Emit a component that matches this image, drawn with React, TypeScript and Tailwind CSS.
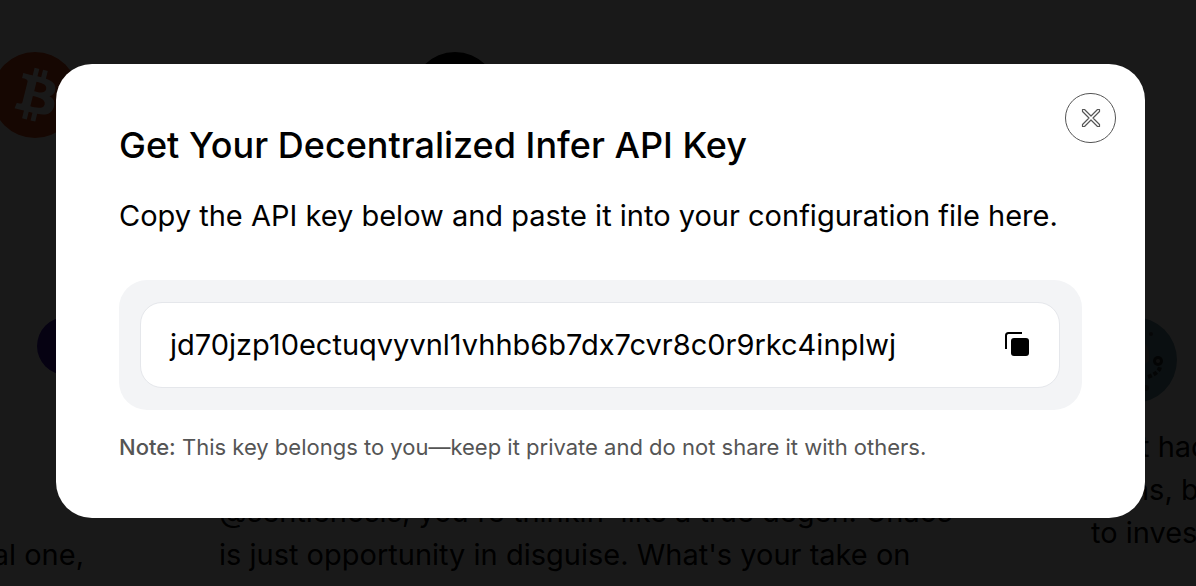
import React from "react";

function BitcoinAvatar() {
  return (
    <svg viewBox="0 0 64 64" className="size-[86px] shrink-0" aria-hidden="true">
      <circle cx="32" cy="32" r="32" fill="#dc4614" />
      <path
        fill="#fff"
        transform="translate(1 0.5)"
        d="M46.1 27.4c.6-4.3-2.6-6.5-7-8l1.400-5.700-3.500-.9-1.400 5.500c-.9-.2-1.900-.4-2.800-.7l1.400-5.500-3.500-.9-1.400 5.700c-.8-.2-1.500-.3-2.200-.5l-4.800-1.200-.9 3.700s2.600.6 2.500.6c1.400.4 1.700 1.300 1.600 2l-1.600 6.500-2.300 9.100c-.2.400-.6 1.100-1.600.8 0 .1-2.500-.6-2.500-.6l-1.700 4 4.500 1.100 2.500.6-1.400 5.800 3.500.9 1.400-5.700c.9.3 1.900.5 2.800.7l-1.400 5.700 3.500.9 1.400-5.800c5.900 1.100 10.400.7 12.300-4.700 1.500-4.300-.1-6.800-3.200-8.400 2.300-.5 4-2 4.400-5zm-7.900 11.100c-1.100 4.300-8.300 2-10.700 1.400l1.900-7.700c2.400.6 9.900 1.800 8.800 6.300zm1.100-11.200c-1 3.900-7 1.900-8.900 1.400l1.700-7c2 .5 8.200 1.400 7.200 5.600z"
      />
    </svg>
  );
}

function DottedAvatar() {
  return (
    <svg viewBox="0 0 86 86" className="size-[86px]" aria-hidden="true">
      <circle cx="43" cy="43" r="43" fill="#6a98a8" />
      <path d="M46 22q14 4 12 22l-8 6z" fill="#a0a4a4" />
      <circle cx="67" cy="44" r="5" fill="#20292e" />
      <circle cx="67" cy="44" r="2" fill="#909090" />
      <circle cx="60" cy="17" r="2" fill="#404b50" />
      <path d="M57 60q11-4 12-10" stroke="#28343a" strokeWidth="4" strokeDasharray="4 2" fill="none" />
      <circle cx="55" cy="71" r="3" fill="#4c5960" />
    </svg>
  );
}

function CloseIcon() {
  return (
    <svg viewBox="0 0 20 20" className="size-5" fill="none" stroke="#555" strokeWidth="1.2" strokeLinejoin="round" aria-hidden="true">
      <path d="M1.500 1.500H3.500L10 8 16.500 1.500H18.500V3.500L12 10 18.500 16.500V18.500H16.500L10 12 3.500 18.500H1.500V16.500L8 10 1.500 3.500Z" />
    </svg>
  );
}

function CopyIcon() {
  return (
    <svg viewBox="0 0 24 24" className="size-6" aria-hidden="true">
      <path d="M1 17V3.500Q1 1 3.500 1H17" fill="none" stroke="#000" strokeWidth="2" />
      <rect x="6" y="6" width="18" height="18" rx="3" />
    </svg>
  );
}

function Backdrop() {
  return (
    <div className="absolute inset-0 overflow-hidden bg-white text-[29px] leading-[43px]" aria-hidden="true">
      <div className="-ml-2 flex gap-[334px] pt-[52px]">
        <BitcoinAvatar />
        <div className="size-[86px] shrink-0 rounded-full bg-black" />
      </div>
      <div className="mt-[135px] flex justify-center gap-[22px] pl-1">
        <section className="w-[850px] shrink-0 px-11 pt-11">
          <div className="mr-[14px] ml-auto size-[58px] rounded-full bg-[#3c14b4]" />
          <p className="mt-[158px] mr-[25px] text-right">You're a real one,</p>
        </section>
        <section className="w-[850px] shrink-0 px-11 pt-11">
          <div className="size-[86px] rounded-full bg-slate-300" />
          <p className="mt-[87px]">
            @sentienosis, you're thinkin' like a true degen. Chaos
            <br />
            is just opportunity in disguise. What's your take on
            <br />
            the market?
          </p>
        </section>
        <section className="w-[850px] shrink-0 px-11 pt-11">
          <DottedAvatar />
          <p className="mt-[22px]">
            Just had some big wins
            <br />
            coins, but I am ready
            <br />
            to invest again
          </p>
        </section>
      </div>
    </div>
  );
}

export default function App() {
  const apiKey = "jd70jzp10ectuqvyvnl1vhhb6b7dx7cvr8c0r9rkc4inplwj";
  return (
    <div className="relative min-h-screen font-['Inter',sans-serif] text-black">
      <Backdrop />
      <div className="relative flex min-h-screen items-start bg-black/90 px-14 pt-16 pr-[51px]">
        <div role="dialog" aria-modal="true" aria-labelledby="title" className="relative w-full rounded-[36px] bg-white px-[63px] pt-[59px] pb-[56px]">
          <button
            type="button"
            aria-label="Close"
            className="absolute top-[29px] right-[29px] flex h-[50px] w-[51px] items-center justify-center rounded-full border border-[#555]"
          >
            <CloseIcon />
          </button>
          <h1 id="title" className="text-[36px] leading-[44px] font-medium">
            Get Your Decentralized Infer API Key
          </h1>
          <p className="mt-[29px] text-[29px] leading-10">
            Copy the API key below and paste it into your configuration file here.
          </p>
          <div className="mt-11 rounded-[28px] bg-[#f3f4f6] py-[22px] pr-[22px] pl-[21px]">
            <div className="flex h-[86px] items-center justify-between rounded-[22px] border border-gray-200 bg-white pr-[30px] pl-[29px]">
              <span className="text-[29px] leading-10">{apiKey}</span>
              <button type="button" aria-label="Copy API key" className="pb-0.5">
                <CopyIcon />
              </button>
            </div>
          </div>
          <p className="mt-[22px] text-[22px] leading-[30px] text-[#555]">
            <strong className="font-medium">Note:</strong> This key belongs to you—keep it private and do not share it with others.
          </p>
        </div>
      </div>
    </div>
  );
}
